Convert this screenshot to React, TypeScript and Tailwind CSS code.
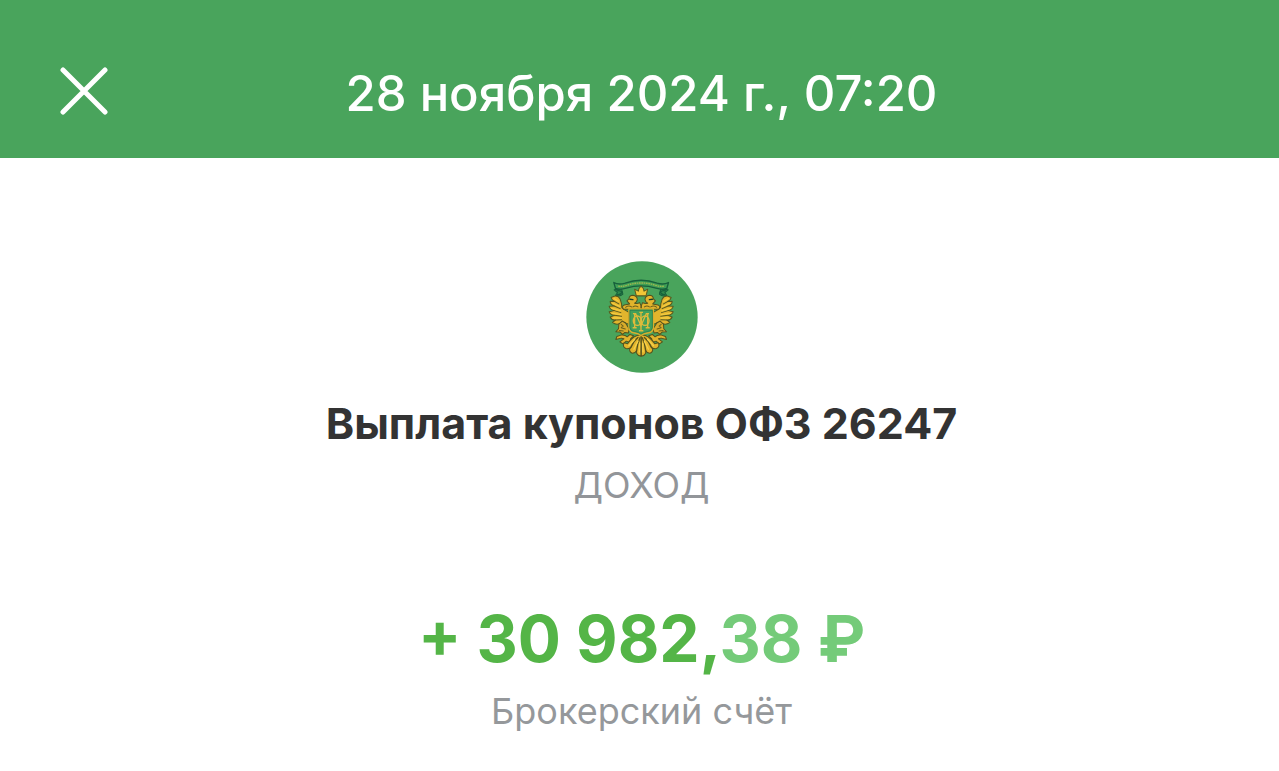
const wing =
  'M148 172 L134 164 L127 158 L126 147 L122 133 Q117 122 104 124 L95 128 Q97 136 106 140 L92 139 Q92 149 104 153 L89 154 Q91 164 104 167 L89 170 Q92 180 105 181 L92 186 Q96 196 108 195 L99 202 Q110 211 122 205 L134 202 L148 208 Z'

function EagleHalf() {
  return (
    <g strokeLinejoin="round" strokeLinecap="round">
      {/* ribbon tail */}
      <path d="M126 102 L104 105 L114 113 L108 122 Q122 126 130 118 Z" fill="#2f8a4c" stroke="#17603c" strokeWidth="3" />
      <path d="M112 108 Q122 106 128 112 Q122 121 114 119" fill="none" stroke="#17603c" strokeWidth="4" />
      {/* wing */}
      <path d={wing} fill="#e2b52d" stroke="#54581f" strokeWidth="3" />
      <path
        d="M106 140 L118 147 M104 153 L122 161 M104 167 L124 173 M105 181 L126 184 M108 195 L126 194"
        fill="none"
        stroke="#54581f"
        strokeWidth="3"
      />
      <path d="M104 131 L117 139 M99 145 L120 154 M97 160 L122 167 M98 175 L124 179 M101 189 L125 189" fill="none" stroke="#f3cb40" strokeWidth="4" />
      {/* neck and head */}
      <path
        d="M184 163 L132 163 Q125 154 134 150 L150 147 L142 138 L148 132 Q149 121 160 121 Q173 123 173 134 Q172 141 165 145 Q174 147 180 143 L184 152 Z"
        fill="#e2b42c"
        stroke="#54521d"
        strokeWidth="3"
      />
      <path d="M138 157 Q147 150 156 156 M160 156 Q167 150 175 156" fill="none" stroke="#6b601d" strokeWidth="3" />
      <path d="M151 133 L160 134" fill="none" stroke="#173f2b" strokeWidth="4" />
      {/* leg with claws */}
      <path
        d="M128 198 L138 204 L149 222 L146 234 L136 232 L129 238 L122 231 L109 230 L117 221 L118 207 Z"
        fill="#d9ac2b"
        stroke="#54521d"
        strokeWidth="3"
      />
      <path d="M125 208 L131 213 L125 218 L137 222 M119 226 L131 228" fill="none" stroke="#6b601d" strokeWidth="3" />
      <path
        d="M124 240 Q136 238 143 245 L151 238 L162 242 L153 251 L151 262 L140 258 L130 266 L121 260 L133 251 L125 249 L109 253 L112 244 Z"
        fill="#e2b42c"
        stroke="#54521d"
        strokeWidth="3"
      />
      {/* tail feathers */}
      <path
        d="M184 239 L172 241 Q155 248 144 266 L134 263 Q127 274 139 280 Q149 282 155 275 L150 282 Q150 292 159 294 Q168 293 171 286 L171 294 Q174 301 184 303 Z"
        fill="#e2b42c"
        stroke="#54521d"
        strokeWidth="3"
      />
      <path d="M175 247 Q162 257 155 275 M181 248 Q173 266 171 286" fill="none" stroke="#54521d" strokeWidth="4" />
      <path d="M165 253 L148 271 M175 258 L163 282 M180 264 L179 290" fill="none" stroke="#f6d14a" strokeWidth="4" />
    </g>
  )
}

function Emblem() {
  return (
    <svg viewBox="20 19 334 334" className="size-28" role="img" aria-label="ОФЗ">
      <circle cx="187" cy="186" r="166" fill="#49a45c" />
      <EagleHalf />
      <g transform="matrix(-1 0 0 1 369 0)">
        <EagleHalf />
      </g>
      {/* ribbon */}
      <path
        d="M103 83 Q116 91 137 85 Q184 68 232 85 Q252 91 266 83 L261 101 Q247 106 229 100 Q184 86 140 100 Q122 106 108 101 Z"
        fill="#3f9f55"
        stroke="#17603c"
        strokeWidth="4"
        strokeLinejoin="round"
      />
      <path d="M116 94 Q132 96 146 90 Q184 79 223 90 Q238 96 254 94" fill="none" stroke="#9db650" strokeWidth="4" strokeDasharray="5 2" />
      {/* crown */}
      <path
        d="M170 123 L165 103 L176 109 L178 101 L184 94 L191 101 L193 109 L204 103 L199 123 Z"
        fill="#f0c637"
        stroke="#5d5a1d"
        strokeWidth="3"
        strokeLinejoin="round"
      />
      {/* shield */}
      <path
        d="M148 162 H221 V219 Q219 231 207 233 Q190 235 184 242 Q178 235 162 233 Q150 231 148 219 Z"
        fill="#43a05a"
        stroke="#dcae2b"
        strokeWidth="4"
      />
      <path d="M151 166 H218 V218 Q216 227 205 229 Q191 231 184 237 Q178 231 164 229 Q152 227 151 218 Z" fill="none" stroke="#25784b" strokeWidth="2" />
      {/* monogram */}
      <g fill="none" stroke="#dfbb3b" strokeWidth="4">
        <path d="M160 176 H168 L184 212 L200 176 H208 M165 178 V217 M204 178 V217 M159 218 H171 M198 218 H210" />
        <path d="M184 172 V227 M179 172 H190 M178 227 H191" />
        <ellipse cx="173" cy="197" rx="12" ry="14" />
        <ellipse cx="196" cy="197" rx="12" ry="14" />
      </g>
    </svg>
  )
}

export default function App() {
  return (
    <div className="bg-white text-center" style={{ fontFamily: 'Inter, "Noto Sans", sans-serif' }}>
      <header className="grid grid-cols-[48px_1fr_48px] items-start bg-[#49a45c] pt-[59px] pr-14 pb-[29px] pl-15 text-white">
        <button type="button" aria-label="Закрыть" className="mt-2 size-12">
          <svg viewBox="0 0 48 48" className="size-12" fill="none" stroke="currentColor" strokeWidth="5" strokeLinecap="round">
            <path d="M3 3 45 45 M45 3 3 45" />
          </svg>
        </button>
        <h1 className="text-[49px] leading-[70px] font-medium whitespace-nowrap">28 ноября 2024 г., 07:20</h1>
      </header>

      <main className="flex flex-col items-center pt-[103px] pr-6 pb-8 pl-7">
        <Emblem />
        <h2 className="mt-6 text-[43px] leading-[52px] font-bold text-[#333333]">Выплата купонов ОФЗ 26247</h2>
        <p className="mt-2 text-[36px] leading-[56px] text-[#929599]">ДОХОД</p>
        <p className="mt-[86px] text-[64px] leading-[80px] font-bold text-[#54b547]">
          + 30 982,<span className="text-[#74cb79]">38 ₽</span>
        </p>
        <p className="mt-2 text-[36px] leading-[48px] text-[#95989b]">Брокерский счёт</p>
      </main>
    </div>
  )
}
